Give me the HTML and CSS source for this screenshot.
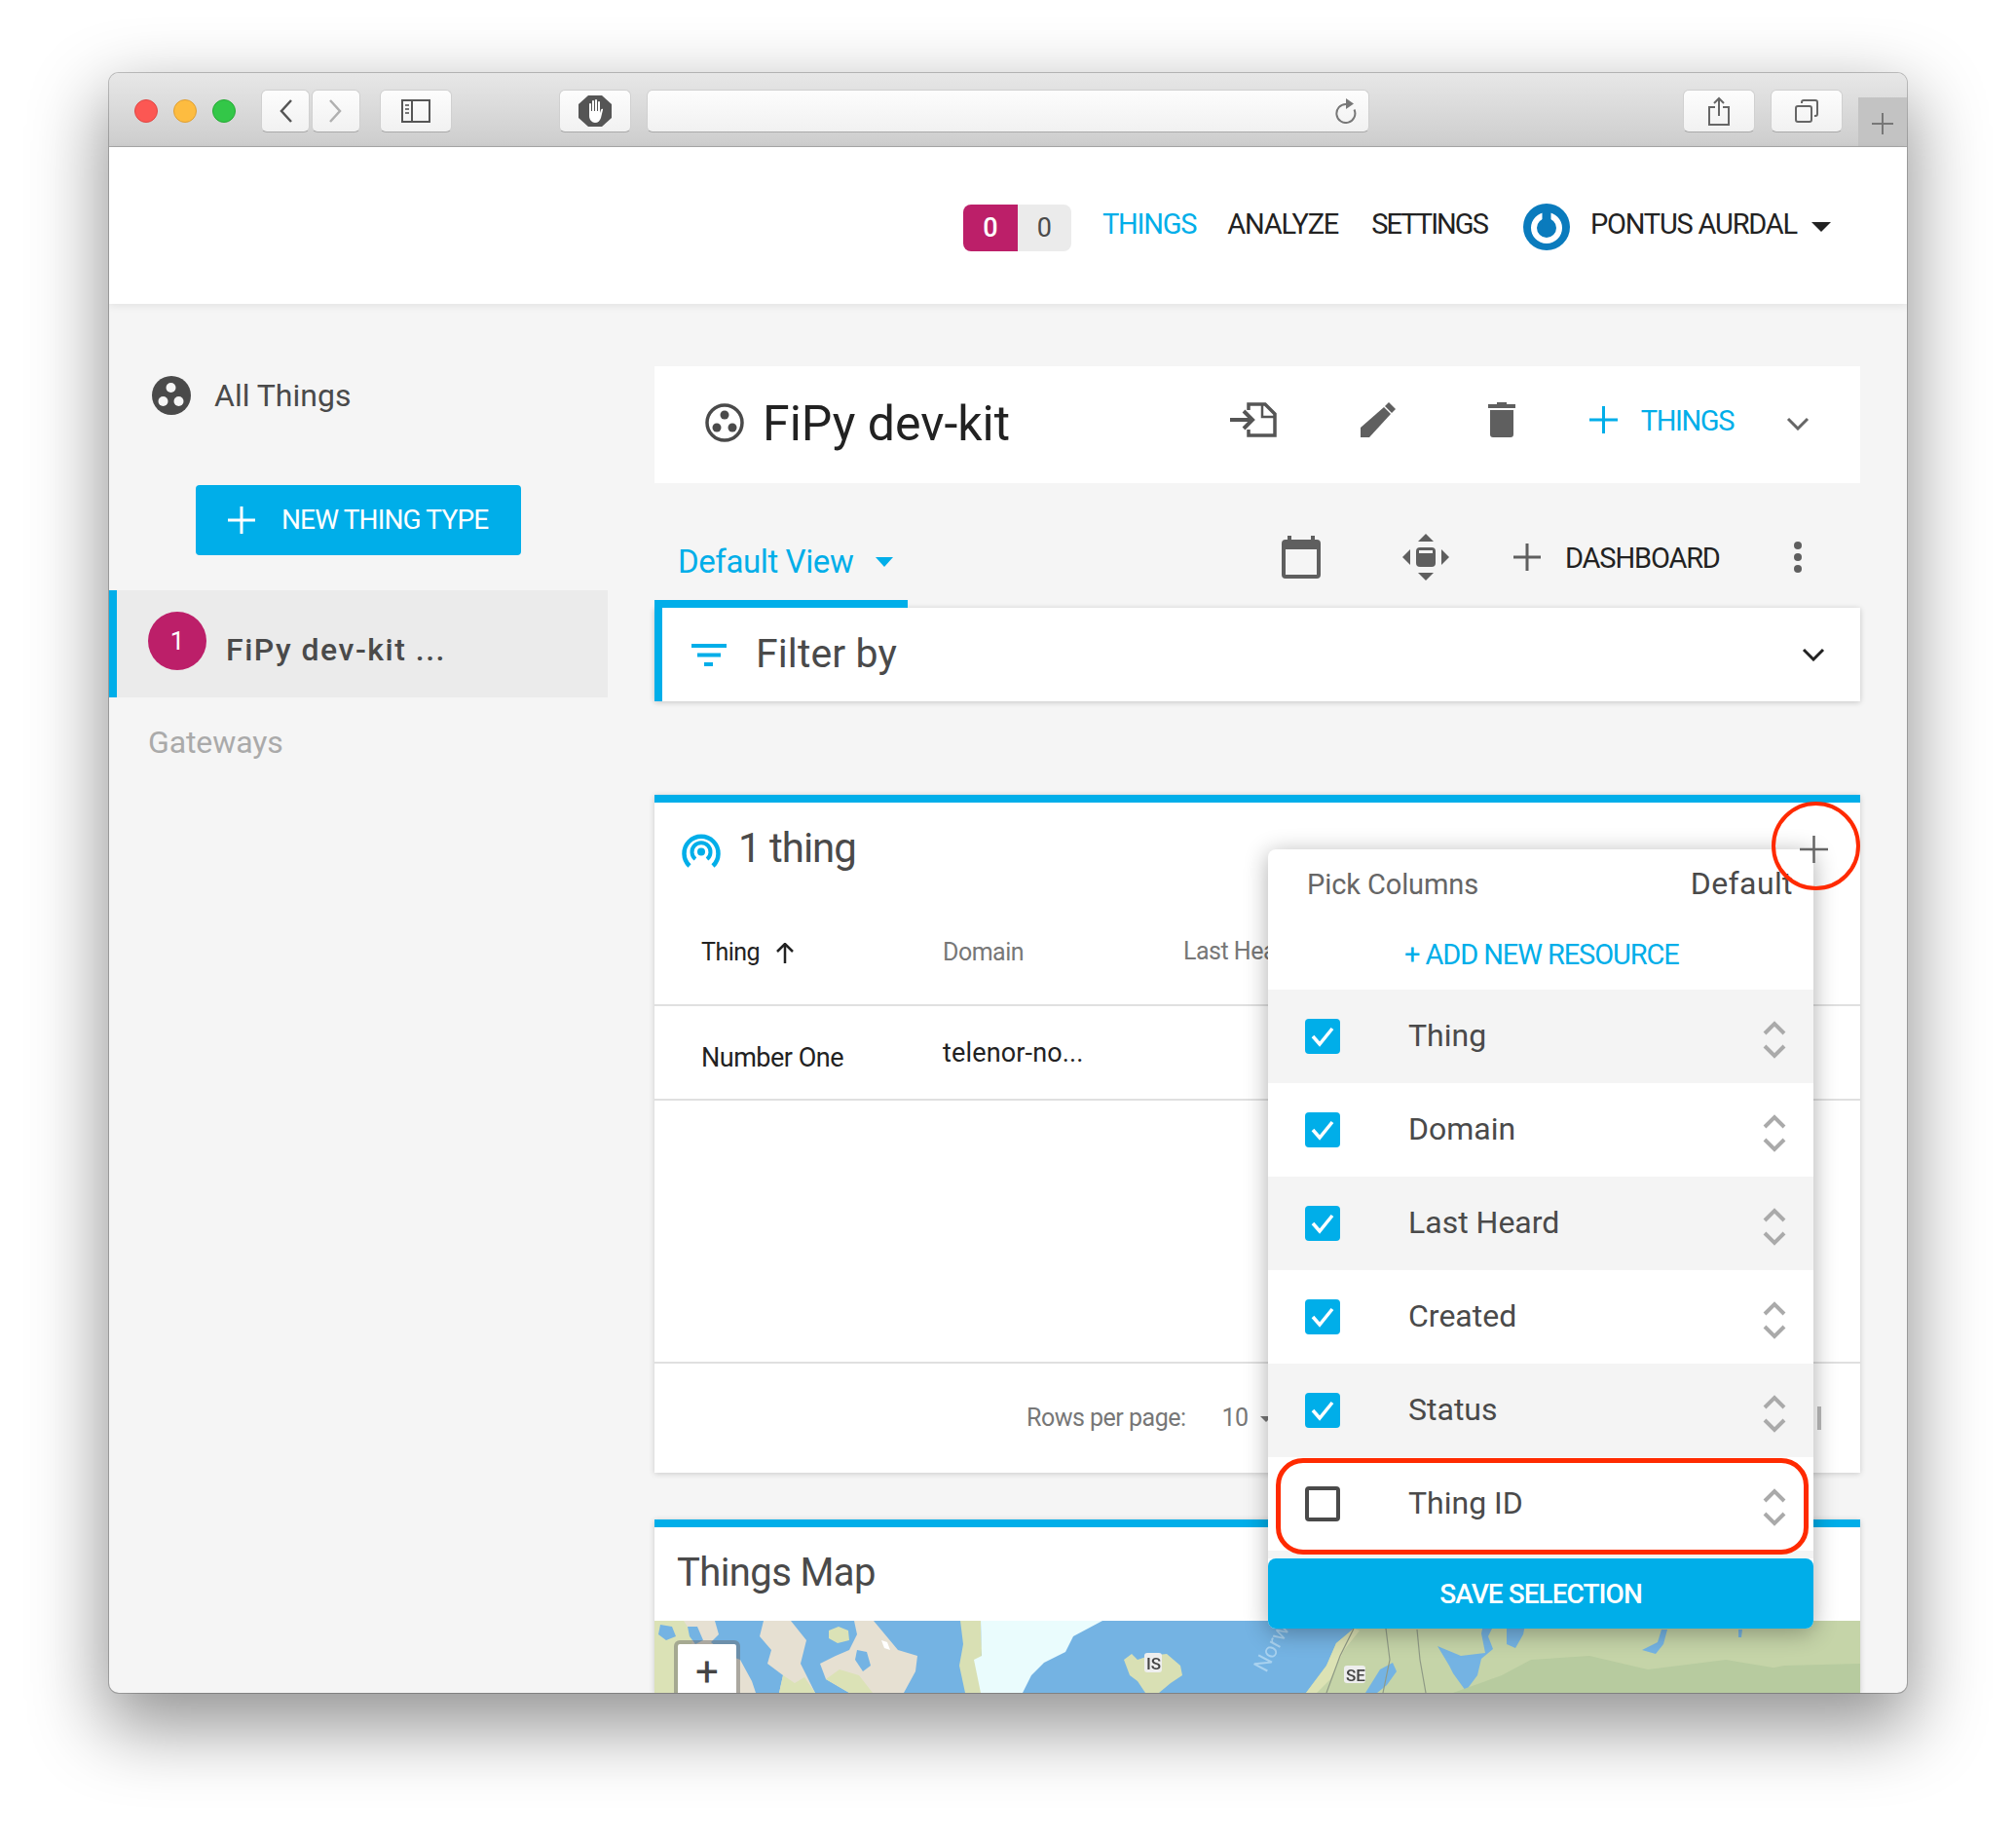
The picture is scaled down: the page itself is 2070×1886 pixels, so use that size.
FILE: index.html
```html
<!DOCTYPE html>
<html lang="en">
<head>
<meta charset="utf-8">
<title>FiPy dev-kit</title>
<link rel="stylesheet" href="styles.css">
</head>
<body>
<div class="window">
  <div class="titlebar">
    <span class="light red"></span><span class="light yellow"></span><span class="light green"></span>
    <div class="tb-btn back"><svg width="14" height="24" viewBox="0 0 14 24"><path d="M13 1 3 12l10 11" fill="none" stroke="#555" stroke-width="2.5"/></svg></div>
    <div class="tb-btn forward"><svg width="14" height="24" viewBox="0 0 14 24"><path d="M1 1l10 11L1 23" fill="none" stroke="#b0b0b0" stroke-width="2.5"/></svg></div>
    <div class="tb-btn side"><svg width="30" height="24" viewBox="0 0 30 24"><rect x="1" y="1" width="28" height="22" fill="none" stroke="#555" stroke-width="2"/><path d="M11 1v22" stroke="#555" stroke-width="2"/><path d="M4 6h4M4 10h4M4 14h4" stroke="#777" stroke-width="2"/></svg></div>
    <div class="tb-btn hand"><svg width="34" height="32" viewBox="0 0 34 32"><path d="M10 0h14l10 9v14l-10 9H10L0 23V9z" fill="#555"/><path d="M11 9a1 1 0 0 1 2 0v7h1V6a1 1 0 0 1 2 0v10h1V5a1 1 0 0 1 2 0v11h1V7a1 1 0 0 1 2 0v11l1-3c1-2 2.500-1 2-.2L23 23c-1 3-3 5-6 5s-6-3-6-7z" fill="#fff"/></svg></div>
    <div class="tb-btn url"><svg width="22" height="26" viewBox="0 0 22 26"><path d="M11 6a9.500 9.500 0 1 0 8.500 5.500" fill="none" stroke="#777" stroke-width="2"/><path d="M11 0l8 5.500-8 5.500z" fill="#777"/></svg></div>
    <div class="tb-btn share"><svg width="22" height="30" viewBox="0 0 22 30"><path d="M7 11H1v18h20V11h-6" fill="none" stroke="#666" stroke-width="2"/><path d="M11 20V2M6 7l5-5 5 5" fill="none" stroke="#666" stroke-width="2"/></svg></div>
    <div class="tb-btn tabs"><svg width="24" height="24" viewBox="0 0 24 24"><rect x="1" y="7" width="16" height="16" rx="2" fill="none" stroke="#666" stroke-width="2"/><path d="M7 4V3a2 2 0 0 1 2-2h12a2 2 0 0 1 2 2v12a2 2 0 0 1-2 2h-1" fill="none" stroke="#666" stroke-width="2"/></svg></div>
    <div class="newtab"><svg width="22" height="22" viewBox="0 0 22 22"><path d="M11 0v22M0 11h22" stroke="#777" stroke-width="2"/></svg></div>
  </div>

  <header class="header">
    <div class="badge"><span class="badge-on">0</span><span class="badge-off">0</span></div>
    <a class="nav nav-active">THINGS</a>
    <a class="nav nav-analyze">ANALYZE</a>
    <a class="nav nav-settings">SETTINGS</a>
    <svg class="power" width="48" height="48" viewBox="0 0 48 48"><circle cx="24" cy="24" r="24" fill="#0a7bbd"/><circle cx="24" cy="25" r="13" fill="none" stroke="#fff" stroke-width="6"/><path d="M24 8v18" stroke="#0a7bbd" stroke-width="9"/></svg>
    <a class="nav nav-user">PONTUS AURDAL</a>
    <span class="user-caret"></span>
  </header>

  <div class="content">
    <aside class="sidebar">
      <div class="all-things">
        <svg width="40" height="40" viewBox="0 0 40 40"><circle cx="20" cy="20" r="20" fill="#4a4a4a"/><g fill="#f5f5f5"><circle cx="19.500" cy="12" r="5"/><circle cx="11.500" cy="26" r="5"/><circle cx="27.500" cy="26" r="5"/></g></svg>
        <span>All Things</span>
      </div>
      <div class="new-type">
        <svg width="28" height="28" viewBox="0 0 28 28"><path d="M14 0v28M0 14h28" stroke="#fff" stroke-width="3"/></svg>
        <span>NEW THING TYPE</span>
      </div>
      <div class="side-item">
        <span class="side-count">1</span>
        <span class="side-label">FiPy dev-kit ...</span>
      </div>
      <div class="gateways">Gateways</div>
    </aside>

    <main class="main">
      <section class="title-card">
        <svg class="title-icon" width="40" height="40" viewBox="0 0 40 40"><circle cx="20" cy="20" r="18" fill="none" stroke="#4a4a4a" stroke-width="3.500"/><g fill="#4a4a4a"><circle cx="20" cy="12" r="4.500"/><circle cx="12" cy="25" r="4.500"/><circle cx="28" cy="25" r="4.500"/></g></svg>
        <h1 class="title">FiPy dev-kit</h1>
        <svg class="ic-import" width="48" height="36" viewBox="0 0 48 36"><path d="M0 18h23M14 9l9 9-9 9" fill="none" stroke="#555" stroke-width="4"/><path d="M19 8V2h17l10 10v22H19v-6" fill="none" stroke="#555" stroke-width="3.500"/><path d="M33 2v13h13" fill="none" stroke="#555" stroke-width="2.500"/></svg>
        <svg class="ic-pencil" width="36" height="36" viewBox="0 0 36 36"><path d="M0 36V26L24 5l7 7L9 36z" fill="#5f5f5f"/><path d="M25 4l4-4 7 7-4 4z" fill="#5f5f5f"/></svg>
        <svg class="ic-trash" width="28" height="36" viewBox="0 0 28 36"><path d="M0 2h9V0h10v2h9v4H0zM2 8h24v25a3 3 0 0 1-3 3H5a3 3 0 0 1-3-3z" fill="#5f5f5f"/></svg>
        <svg class="ic-plus" width="29" height="28" viewBox="0 0 29 28"><path d="M14.500 0v28M0 14h29" stroke="#00aee9" stroke-width="3"/></svg>
        <span class="title-things">THINGS</span>
        <svg class="ic-chev" width="24" height="14" viewBox="0 0 24 14"><path d="M2 2l10 10L22 2" fill="none" stroke="#666" stroke-width="3"/></svg>
      </section>

      <section class="tabs-row">
        <div class="tab">Default View<span class="tab-caret"></span></div>
        <svg class="ic-cal" width="40" height="44" viewBox="0 0 40 44"><path fill-rule="evenodd" d="M6 0h4v4h20V0h4v4h2a4 4 0 0 1 4 4v32a4 4 0 0 1-4 4H4a4 4 0 0 1-4-4V8a4 4 0 0 1 4-4h2zM4 14v26h32V14z" fill="#5f5f5f"/></svg>
        <svg class="ic-move" width="48" height="48" viewBox="0 0 48 48"><path d="M24 0l8 8H16zM24 48l-8-8h16zM0 24l8-8v16zM48 24l-8 8V16z" fill="#5f5f5f"/><rect x="14" y="14" width="20" height="20" rx="4" fill="#5f5f5f"/><rect x="17" y="17" width="14" height="3" fill="#f4f4f4"/></svg>
        <svg class="ic-dash" width="28" height="28" viewBox="0 0 28 28"><path d="M14 0v28M0 14h28" stroke="#5f5f5f" stroke-width="3"/></svg>
        <span class="dash-label">DASHBOARD</span>
        <svg class="ic-dots" width="10" height="32" viewBox="0 0 10 32"><g fill="#5f5f5f"><circle cx="5" cy="4" r="4"/><circle cx="5" cy="16" r="4"/><circle cx="5" cy="28" r="4"/></g></svg>
      </section>

      <section class="filter-card">
        <svg width="36" height="23" viewBox="0 0 36 23"><path d="M0 2h36M6 11.500h24M13 21h9" stroke="#00aee9" stroke-width="4"/></svg>
        <span class="filter-label">Filter by</span>
        <svg class="filter-chev" width="24" height="14" viewBox="0 0 24 14"><path d="M2 2l10 10L22 2" fill="none" stroke="#222" stroke-width="3"/></svg>
      </section>

      <section class="card things-card">
        <div class="card-head">
          <svg width="40" height="37" viewBox="0 0 40 37"><path d="M8 35A17.500 17.500 0 1 1 32 35" fill="none" stroke="#00aee9" stroke-width="4.500"/><path d="M14 28a9.500 9.500 0 1 1 12 0" fill="none" stroke="#00aee9" stroke-width="4"/><circle cx="20" cy="20.500" r="4" fill="#00aee9"/></svg>
          <span class="card-title">1 thing</span>
          <svg class="add-col" width="29" height="28" viewBox="0 0 29 28"><path d="M14.500 0v28M0 14h29" stroke="#666" stroke-width="2.500"/></svg>
        </div>
        <div class="t-row t-head">
          <span class="th-sort">Thing <svg width="20" height="21" viewBox="0 0 20 21"><path d="M10 21V2M2 9l8-8 8 8" fill="none" stroke="#222" stroke-width="2.500"/></svg></span>
          <span class="th">Domain</span>
          <span class="th th-heard">Last Heard</span>
        </div>
        <div class="t-row t-body">
          <span class="td-name">Number One</span>
          <span class="td-domain">telenor-no...</span>
        </div>
        <div class="t-empty"></div>
        <div class="t-foot">
          <span class="rows-label">Rows per page:</span>
          <span class="rows-num">10</span>
          <span class="rows-caret"></span>
          <span class="first-bar"></span>
        </div>

        <div class="popup">
          <div class="pop-head"><span class="pop-title">Pick Columns</span><span class="pop-default">Default</span></div>
          <div class="pop-add">+ ADD NEW RESOURCE</div>
          <div class="pop-row alt"><span class="cb on"><svg width="28" height="24" viewBox="0 0 28 24"><path d="M4 12l7 8L24 4" fill="none" stroke="#fff" stroke-width="3.500"/></svg></span><span class="pop-label">Thing</span><svg class="updown" width="24" height="39" viewBox="0 0 24 39"><path d="M2 13 12 3l10 10M2 26l10 10 10-10" fill="none" stroke="#aaa" stroke-width="4"/></svg></div>
          <div class="pop-row"><span class="cb on"><svg width="28" height="24" viewBox="0 0 28 24"><path d="M4 12l7 8L24 4" fill="none" stroke="#fff" stroke-width="3.500"/></svg></span><span class="pop-label">Domain</span><svg class="updown" width="24" height="39" viewBox="0 0 24 39"><path d="M2 13 12 3l10 10M2 26l10 10 10-10" fill="none" stroke="#aaa" stroke-width="4"/></svg></div>
          <div class="pop-row alt"><span class="cb on"><svg width="28" height="24" viewBox="0 0 28 24"><path d="M4 12l7 8L24 4" fill="none" stroke="#fff" stroke-width="3.500"/></svg></span><span class="pop-label">Last Heard</span><svg class="updown" width="24" height="39" viewBox="0 0 24 39"><path d="M2 13 12 3l10 10M2 26l10 10 10-10" fill="none" stroke="#aaa" stroke-width="4"/></svg></div>
          <div class="pop-row"><span class="cb on"><svg width="28" height="24" viewBox="0 0 28 24"><path d="M4 12l7 8L24 4" fill="none" stroke="#fff" stroke-width="3.500"/></svg></span><span class="pop-label">Created</span><svg class="updown" width="24" height="39" viewBox="0 0 24 39"><path d="M2 13 12 3l10 10M2 26l10 10 10-10" fill="none" stroke="#aaa" stroke-width="4"/></svg></div>
          <div class="pop-row alt"><span class="cb on"><svg width="28" height="24" viewBox="0 0 28 24"><path d="M4 12l7 8L24 4" fill="none" stroke="#fff" stroke-width="3.500"/></svg></span><span class="pop-label">Status</span><svg class="updown" width="24" height="39" viewBox="0 0 24 39"><path d="M2 13 12 3l10 10M2 26l10 10 10-10" fill="none" stroke="#aaa" stroke-width="4"/></svg></div>
          <div class="pop-row"><span class="cb"></span><span class="pop-label">Thing ID</span><svg class="updown" width="24" height="39" viewBox="0 0 24 39"><path d="M2 13 12 3l10 10M2 26l10 10 10-10" fill="none" stroke="#aaa" stroke-width="4"/></svg></div>
          <div class="pop-gap"></div>
          <div class="pop-save">SAVE SELECTION</div>
        </div>
        <span class="mark-circle"></span>
        <span class="mark-rect"></span>
      </section>

      <section class="card map-card">
        <div class="map-head">Things Map</div>
        <div class="map">
          <svg class="map-art" width="1238" height="74" viewBox="0 0 1238 74">
            <rect width="1238" height="74" fill="#74b3e3"/>
            <path d="M0 0H62L66 14 58 22 72 34 88 40 100 62 104 74H0Z" fill="#e6e0d2"/>
            <path d="M0 0H30L40 16 34 40 44 74H0Z" fill="#dbe2b6"/>
            <path d="M34 6l10 0 6 14-8 4-6-8zM6 4l12 2 4 10-10 4-8-6z" fill="#74b3e3"/>
            <path d="M112 0H140L156 20 150 44 158 60 165 74H128L132 56 116 44 120 30 108 16Z" fill="#e6e0d2"/>
            <path d="M128 74l4-18 12 8 10-6 11 16z" fill="#dbe2b6"/>
            <path d="M205 0H225L250 30 270 36 268 52 256 74H200L176 60 170 44 186 36 200 30 208 14Z" fill="#e6e0d2"/>
            <path d="M176 60l14-10 20 6 14 18h-24zM179 10l10-4 10 4 1 10-12 3-9-5z" fill="#dbe2b6"/>
            <path d="M208 30l10 2 4 14-8 6-8-12z" fill="#74b3e3"/>
            <path d="M233 20l6 2 3 8-6-2z" fill="#fff"/>
            <path d="M314 0h21l1 28-1 46h-16l-6-28 4-22z" fill="#d9e0b4"/>
            <path d="M335 0H460L430 16 422 32 400 43 387 56 378 74H335L328 40 336 36Z" fill="#eafcfd"/>
            <path d="M482 40l8-6 6 6 12-4 18-2 14 12 2 10-12 8-12 10h-14l-8-12-8-6z" fill="#d9e0b4"/>
            <path d="M669 74L690 46 700 23 718 8 722 0H1238V74Z" fill="#c5d4a8"/>
            <path d="M669 74L690 46 700 23 718 8 724 10 708 30 694 60 680 74Z" fill="#dce2b4"/>
            <path d="M730 74 745 50 758 43 762 52 752 66 742 74Z" fill="#74b3e3"/>
            <path d="M804 26 828 36 853 33 849 13 851 4 862 4 856 16 861 29 849 39 845 56 833 72 820 54 816 46Z" fill="#74b3e3"/>
            <path d="M875 8 894 4 892 14 884 28 875 24ZM1040 9 1036 24 1028 34 1014 30 1018 28 1030 22 1034 9ZM1113 9h4l-1 8h-3z" fill="#74b3e3"/>
            <path d="M820 74 870 56 900 40 960 36 1020 50 1100 40 1160 50 1238 44V74ZM1100 58l60-12 78-2v30h-138z" fill="#b7cb9f"/>
            <path d="M718 8 704 36 690 74M751 8 755 40 748 74M783 9 786 40 792 74" fill="none" stroke="#8f9a86" stroke-width="1.200"/>
            <g class="map-label"><rect x="503" y="33" width="18" height="20" rx="3" fill="#eee"/><text x="505" y="50">IS</text></g>
            <g class="map-label"><rect x="708" y="46" width="22" height="18" rx="3" fill="#eee"/><text x="710" y="62">SE</text></g>
            <text class="map-sea" transform="translate(628 54) rotate(-62)">Norw</text>
          </svg>
          <div class="zoom-ctl">+</div>
        </div>
      </section>
    </main>
  </div>
</div>
</body>
</html>
```

FILE: styles.css
```css
* { box-sizing: border-box; }
html, body { margin: 0; height: 100%; }
body {
  background: #fff;
  padding: 75px 0 0 112px;
  font-family: Roboto, "Noto Sans", sans-serif;
  color: #222;
  overflow: hidden;
}
svg { display: block; flex: none; }

.window {
  width: 1846px;
  height: 1663px;
  border-radius: 10px;
  overflow: hidden;
  background: #f5f5f5;
  display: flex;
  flex-direction: column;
  box-shadow: 0 0 0 1px rgba(0,0,0,.22), 0 30px 75px 6px rgba(0,0,0,.42);
}

/* browser chrome */
.titlebar {
  flex: none;
  height: 76px;
  display: flex;
  align-items: flex-start;
  padding: 17px 0 0 26px;
  background: linear-gradient(#e7e7e7, #cdcdcd);
  border-bottom: 1px solid #a8a8a8;
}
.light { width: 24px; height: 24px; border-radius: 50%; margin: 10px 16px 0 0; flex: none; }
.red { background: #fc5753; border: 1px solid #df4744; }
.yellow { background: #fdbc40; border: 1px solid #de9f34; }
.green { background: #33c748; border: 1px solid #27aa35; margin-right: 0; }
.tb-btn {
  height: 44px;
  flex: none;
  display: flex;
  align-items: center;
  justify-content: center;
  border-radius: 6px;
  background: linear-gradient(#fdfdfd, #f1f1f1);
  border: 1px solid #d0d0d0;
  border-bottom: 1px solid #a9a9a9;
}
.back { width: 50px; margin-left: 26px; }
.forward { width: 50px; margin-left: 2px; }
.side { width: 74px; margin-left: 20px; }
.hand { width: 74px; margin-left: 110px; }
.url { width: 742px; margin-left: 16px; justify-content: flex-end; padding-right: 12px; }
.share { width: 74px; margin-left: 322px; }
.tabs { width: 74px; margin-left: 16px; }
.newtab {
  width: 50px;
  height: 50px;
  margin: 8px 0 0 16px;
  background: #c3c3c3;
  display: flex;
  align-items: center;
  justify-content: center;
  padding-top: 4px;
}

/* app header */
.header {
  flex: none;
  height: 161px;
  background: #fff;
  display: flex;
  align-items: center;
  justify-content: flex-end;
  padding: 4px 78px 0 0;
  box-shadow: 0 2px 8px rgba(0,0,0,.08);
  position: relative;
  z-index: 2;
}
.badge { display: flex; height: 48px; border-radius: 8px; overflow: hidden; font-size: 27px; }
.badge-on { width: 56px; background: #bc1f69; color: #fff; font-weight: 500; display: flex; align-items: center; justify-content: center; }
.badge-off { width: 55px; background: #ebebeb; color: #4a4a4a; display: flex; align-items: center; justify-content: center; }
.nav { font-size: 29px; letter-spacing: -1.2px; line-height: 40px; margin-top: -7px; color: #222; white-space: nowrap; }
.nav-active { color: #00aee9; margin-left: 32px; }
.nav-analyze { margin-left: 32px; }
.nav-settings { margin-left: 34px; letter-spacing: -1.95px; }
.power { margin-left: 37px; margin-top: -2px; }
.nav-user { margin-left: 21px; }
.user-caret { width: 0; height: 0; margin: -2px 0 0 15px; border: 10px solid transparent; border-top-color: #222; border-bottom: 0; }

/* layout */
.content { flex: 1; display: flex; min-height: 0; }
.sidebar { flex: none; width: 512px; padding-top: 74px; }
.main { flex: none; width: 1238px; margin-left: 48px; padding-top: 64px; }

/* sidebar */
.all-things { display: flex; align-items: center; height: 40px; margin-left: 44px; gap: 24px; font-size: 32px; letter-spacing: 0; color: #4a4a4a; }
.new-type {
  width: 334px;
  height: 72px;
  margin: 72px 0 0 89px;
  padding-left: 33px;
  display: flex;
  align-items: center;
  gap: 27px;
  background: #00aee9;
  border-radius: 4px;
  color: #fff;
  font-size: 28px;
  letter-spacing: -.85px;
  white-space: nowrap;
}
.new-type span { margin-top: -2px; }
.side-item {
  height: 110px;
  margin-top: 36px;
  padding-left: 32px;
  display: flex;
  align-items: center;
  background: #ebebeb;
  border-left: 8px solid #00aee9;
}
.side-count {
  width: 60px;
  height: 60px;
  margin-top: -6px;
  border-radius: 50%;
  background: #bc1f69;
  color: #fff;
  font-size: 26px;
  display: flex;
  align-items: center;
  justify-content: center;
}
.side-label { margin: 12px 0 0 20px; font-size: 32px; font-weight: 500; letter-spacing: 1.5px; color: #4a4a4a; white-space: nowrap; }
.gateways { margin: 26px 0 0 40px; font-size: 32px; line-height: 40px; letter-spacing: -.1px; color: #aaa; }

/* title */
.title-card { height: 120px; background: #fff; display: flex; align-items: center; position: relative; padding-left: 52px; }
.title { margin: -2px 0 0 19px; font-size: 50px; line-height: 60px; font-weight: 400; letter-spacing: 0; color: #222; white-space: nowrap; }
.ic-import { margin: -10px 0 0 auto; }
.title-icon { margin-top: -4px; }
.ic-pencil { margin: -10px 0 0 86px; }
.ic-trash { margin: -10px 0 0 95px; }
.ic-plus { margin: -10px 0 0 76px; }
.title-things { margin: -8px 0 0 24px; font-size: 29px; letter-spacing: -1.4px; color: #00aee9; }
.ic-chev { margin: -2px 52px 0 54px; }

/* tab bar */
.tabs-row { height: 128px; display: flex; align-items: flex-start; }
.tab {
  width: 260px;
  height: 128px;
  padding: 59px 0 0 24px;
  border-bottom: 8px solid #00aee9;
  font-size: 33px;
  line-height: 44px;
  letter-spacing: -.4px;
  color: #00aee9;
  display: flex;
  white-space: nowrap;
}
.tab-caret { width: 0; height: 0; margin: 17px 0 0 23px; border: 9px solid transparent; border-top: 10px solid #00aee9; border-bottom: 0; }
.ic-cal { margin: 54px 0 0 384px; }
.ic-move { margin: 52px 0 0 84px; }
.ic-dash { margin: 62px 0 0 66px; }
.dash-label { margin: 60px 0 0 25px; font-size: 29px; line-height: 34px; letter-spacing: -1.15px; color: #222; white-space: nowrap; }
.ic-dots { margin: 60px 0 0 75px; }

/* filter */
.filter-card {
  height: 96px;
  display: flex;
  align-items: center;
  padding-left: 30px;
  background: #fff;
  border-left: 8px solid #00aee9;
  box-shadow: 0 1px 6px rgba(0,0,0,.2);
}
.filter-label { margin: -2px 0 0 30px; font-size: 41px; letter-spacing: .1px; color: #4a4a4a; }
.filter-chev { margin: 0 36px 0 auto; }

/* cards */
.card { background: #fff; border-top: 8px solid #00aee9; box-shadow: 0 1px 6px rgba(0,0,0,.18); }
.things-card { height: 696px; margin-top: 96px; position: relative; display: flex; flex-direction: column; z-index: 3; }
.card-head { height: 116px; padding: 30px 0 0 28px; display: flex; align-items: flex-start; }
.card-title { margin: -11px 0 0 18px; font-size: 42px; line-height: 56px; letter-spacing: -1px; color: #4a4a4a; white-space: nowrap; }
.add-col { position: absolute; left: 1176px; top: 34px; z-index: 6; }
.t-row { display: grid; grid-template-columns: 248px 247px 1fr; padding-left: 48px; border-bottom: 2px solid #e0e0e0; }
.t-head { height: 93px; align-items: start; padding-top: 22px; font-size: 25px; line-height: 32px; letter-spacing: -.5px; }
.th-sort { display: flex; align-items: center; gap: 16px; color: #222; }
.th { color: #777; }
.th-heard { margin-top: -1px; }
.t-body { height: 97px; font-size: 27px; letter-spacing: -.5px; color: #222; }
.td-name { margin-top: 37px; }
.td-domain { margin-top: 32px; letter-spacing: .15px; }
.t-empty { height: 270px; border-bottom: 2px solid #e0e0e0; flex: none; }
.t-foot { flex: 1; display: flex; align-items: flex-start; padding: 40px 0 0 382px; color: #777; font-size: 25px; line-height: 32px; letter-spacing: -.5px; }
.rows-num { margin-left: 37px; }
.rows-caret { width: 0; height: 0; margin: 14px 0 0 12px; border: 6px solid transparent; border-top-color: #777; border-bottom: 0; }
.first-bar { width: 4px; height: 24px; margin: 4px 40px 0 auto; background: #bbb; }

/* popup */
.popup {
  position: absolute;
  left: 630px;
  top: 48px;
  width: 560px;
  border-radius: 8px;
  background: #fff;
  box-shadow: 0 4px 24px rgba(0,0,0,.32);
  z-index: 5;
}
.pop-head { height: 68px; display: flex; justify-content: space-between; align-items: center; padding: 0 21px 0 40px; color: #666; white-space: nowrap; }
.pop-title { font-size: 29px; letter-spacing: -.1px; margin-top: 3px; }
.pop-default { font-size: 32px; letter-spacing: .4px; color: #4a4a4a; margin-top: 2px; }
.pop-add { height: 76px; padding: 20px 0 0 140px; font-size: 29px; line-height: 40px; letter-spacing: -1.1px; color: #00aee9; white-space: nowrap; }
.pop-row { height: 96px; display: flex; align-items: center; padding: 0 28px 0 38px; background: #fff; }
.pop-row.alt, .pop-gap { background: #f4f4f4; }
.pop-gap { height: 8px; }
.cb { width: 36px; height: 36px; border-radius: 4px; border: 4px solid #4a4a4a; flex: none; }
.cb.on { background: #00aee9; border: 0; display: flex; align-items: center; justify-content: center; }
.pop-label { margin: -3px 0 0 70px; font-size: 32px; letter-spacing: 0; color: #4a4a4a; }
.updown { margin: 7px 0 0 auto; }
.pop-save { height: 72px; display: flex; align-items: center; justify-content: center; background: #00aee9; border-radius: 8px; color: #fff; font-size: 28px; font-weight: 500; letter-spacing: -.95px; position: relative; }

/* annotations */
.mark-circle { position: absolute; left: 1147px; top: -1px; width: 91px; height: 91px; border: 4px solid #ff2a00; border-radius: 50%; z-index: 7; }
.mark-rect { position: absolute; left: 638px; top: 673px; width: 547px; height: 99px; border: 5px solid #ff2a00; border-radius: 28px; z-index: 7; }

/* map */
.map-card { margin-top: 48px; position: relative; }
.map-head { height: 96px; padding: 22px 0 0 23px; font-size: 40px; line-height: 50px; letter-spacing: -.6px; color: #4a4a4a; }
.map { height: 74px; position: relative; overflow: hidden; }
.map-art { filter: blur(.7px); }
.map-art text { font-family: Roboto, sans-serif; font-size: 17px; font-weight: 500; fill: #444; }
.map-art .map-sea { font-size: 22px; font-weight: 400; fill: #a9d2ef; }
.zoom-ctl {
  position: absolute;
  left: 20px;
  top: 20px;
  width: 68px;
  height: 80px;
  padding-top: 6px;
  background: #fff;
  background-clip: padding-box;
  border: 4px solid rgba(100,100,100,.45);
  border-radius: 6px;
  font-size: 42px;
  line-height: 46px;
  text-align: center;
  color: #444;
}
```
